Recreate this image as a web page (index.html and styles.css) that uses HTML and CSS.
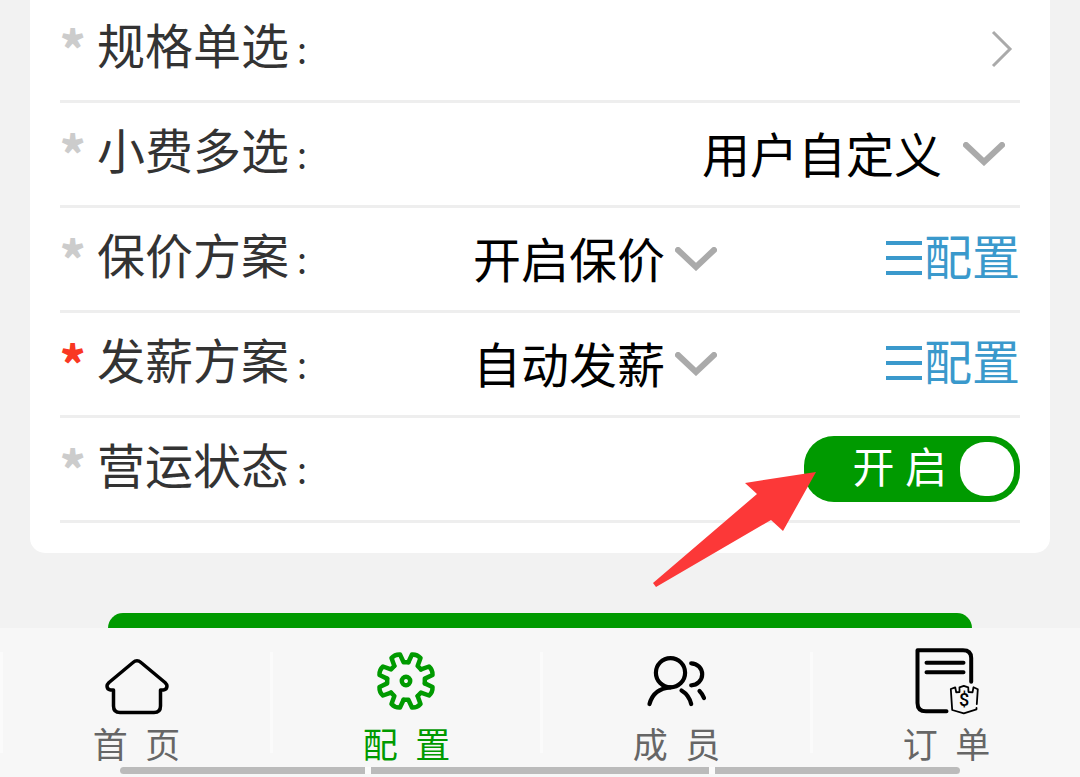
FILE: index.html
```
<!DOCTYPE html>
<html lang="zh">
  <head>
    <meta charset="UTF-8" />
    <meta name="viewport" content="width=device-width, initial-scale=1.0" />
    <title>配置</title>
    <link rel="stylesheet" href="styles.css">
  </head>
  <body>
    <main class="page">
      <form class="form-card">
        <!-- 规格单选 -->
        <div class="row">
          <span class="star">*</span>
          <span class="label">规格单选<span class="colon">:</span></span>
          <button type="button" class="more" aria-label="规格单选">
            <svg width="22" height="38" viewBox="0 0 22 38"><path d="M2 2 L19 19 L2 36" /></svg>
          </button>
        </div>

        <!-- 小费多选 -->
        <div class="row">
          <span class="star">*</span>
          <label class="label" for="tip">小费多选<span class="colon">:</span></label>
          <div class="picker picker-end">
            <select id="tip"><option>用户自定义</option></select>
            <svg class="arrow" viewBox="0 0 42 24"><path d="M3 3 L21 20 L39 3" /></svg>
          </div>
        </div>

        <!-- 保价方案 -->
        <div class="row">
          <span class="star">*</span>
          <label class="label" for="insure">保价方案<span class="colon">:</span></label>
          <div class="picker">
            <select id="insure"><option>开启保价</option></select>
            <svg class="arrow" viewBox="0 0 42 24"><path d="M3 3 L21 20 L39 3" /></svg>
          </div>
          <a class="config" href="#insure">
            <svg width="40" height="36" viewBox="0 0 40 36"><path d="M2 2 H38 M2 17 H38 M2 32 H38" /></svg>配置
          </a>
        </div>

        <!-- 发薪方案 -->
        <div class="row">
          <span class="star required">*</span>
          <label class="label" for="salary">发薪方案<span class="colon">:</span></label>
          <div class="picker">
            <select id="salary"><option>自动发薪</option></select>
            <svg class="arrow" viewBox="0 0 42 24"><path d="M3 3 L21 20 L39 3" /></svg>
          </div>
          <a class="config" href="#salary">
            <svg width="40" height="36" viewBox="0 0 40 36"><path d="M2 2 H38 M2 17 H38 M2 32 H38" /></svg>配置
          </a>
        </div>

        <!-- 营运状态 -->
        <div class="row">
          <span class="star">*</span>
          <label class="label" for="status">营运状态<span class="colon">:</span></label>
          <label class="switch" for="status">
            <span>开 启</span>
            <input type="checkbox" id="status" checked />
          </label>
          <svg class="pointer" width="164" height="116" viewBox="0 0 164 116">
            <path d="M163 0 L92 11 L104 22 L0 111 L3 115 L118 48 L130 59 Z" />
          </svg>
        </div>
      </form>

      <button type="button" class="submit" aria-label="提交"></button>
    </main>

    <!-- 底部导航 -->
    <nav class="tabbar">
      <a class="tab" href="#home">
        <svg class="icon" viewBox="0 0 72 72" stroke-width="3.5">
          <path d="M12.5 45 H9.5 Q6 44.5 6 41 Q6 39.5 8 37.5 L32 17.5 Q36 14 40 17.5 L64 37.5 Q66 39.5 66 41 Q66 44.5 62.5 45 H59.5 V61 Q59.5 67.5 53 67.5 H19 Q12.5 67.5 12.5 61 Z" />
        </svg>
        <span>首&nbsp; 页</span>
      </a>
      <a class="tab active" href="#config">
        <svg class="icon" viewBox="-35 -36 72 72" stroke-width="4.5">
          <defs>
            <path id="tooth" d="M-5 -18.3 L-4.6 -26.8 Q0 -29 4.6 -26.8 L5 -18.3 L9.4 -16.5" />
          </defs>
          <use href="#tooth" transform="rotate(22.5)" />
          <use href="#tooth" transform="rotate(67.5)" />
          <use href="#tooth" transform="rotate(112.5)" />
          <use href="#tooth" transform="rotate(157.5)" />
          <use href="#tooth" transform="rotate(202.5)" />
          <use href="#tooth" transform="rotate(247.5)" />
          <use href="#tooth" transform="rotate(292.5)" />
          <use href="#tooth" transform="rotate(337.5)" />
          <circle r="4.2" />
        </svg>
        <span>配&nbsp; 置</span>
      </a>
      <a class="tab" href="#members">
        <svg class="icon" viewBox="0 0 72 72" stroke-width="4.2">
          <circle cx="29.5" cy="27.7" r="14.6" />
          <path d="M8.5 59 Q12.5 43.5 29.5 42.3 M40.5 45.5 Q48 50 50.2 59 M50.2 18.3 A11 11 0 0 1 50.2 40.3 M58.5 46 Q61.5 49 63 53" />
        </svg>
        <span>成&nbsp; 员</span>
      </a>
      <a class="tab" href="#orders">
        <svg class="icon" viewBox="0 0 72 72" stroke-width="4">
          <path d="M60.2 36.7 V13 Q60.2 5.2 52 5.2 H6.5 V58 Q6.5 66.3 15 66.3 H35.5 M15.5 17.7 H52.5 M15.5 27.3 H52.5" />
          <path stroke-width="1.8" d="M65.8 59 L66.8 44.3 L62.5 42.3 L61.5 47.3 L57.5 47 L57.2 42.3 L52.8 40.8 L48.5 42.3 L48.5 47 L45.2 47.3 L44.2 42.3 L39.8 44 L41.2 65 L52.8 68.3 L65.5 64.3 V63" />
          <text class="coin" x="53" y="61">$</text>
        </svg>
        <span>订&nbsp; 单</span>
      </a>
      <div class="gesture">
        <i class="side"></i>
        <i class="mid"></i>
        <i class="side"></i>
      </div>
    </nav>
  </body>
</html>
```
FILE: styles.css
```
:root {
  --green: #009a00;
  --blue: #3a99cc;
  --line: #eeeeee;
  --gray: #aaaaaa;
}

* {
  margin: 0;
  padding: 0;
  box-sizing: border-box;
}

body {
  font-family: Roboto, "Noto Sans CJK SC", sans-serif;
  font-size: 48px;
  line-height: 60px;
  color: #333;
  background: #f2f2f2;
  height: 100vh;
  overflow: hidden;
}

svg {
  display: block;
  fill: none;
}

/* 表单卡片 */
.form-card {
  margin: -2px 30px 0;
  padding: 0 30px 30px;
  background: #fff;
  border-radius: 0 0 15px 15px;
}

.row {
  position: relative;
  display: flex;
  align-items: center;
  height: 105px;
  border-bottom: 3px solid var(--line);
}

.star {
  width: 37px;
  padding-bottom: 6px;
  font-family: "Noto Sans CJK SC", sans-serif;
  font-weight: 900;
  color: #ccc;
}

.star.required {
  color: #f93722;
}

.label {
  width: 376px;
  padding-bottom: 2px;
}

.colon {
  margin-left: 8px;
  font-family: "Noto Sans CJK SC", sans-serif;
  font-size: 36px;
}

.more {
  margin-left: auto;
  padding-right: 7px;
  border: 0;
  background: none;
}

.more path {
  stroke: var(--gray);
  stroke-width: 3;
}

.picker {
  display: flex;
  align-items: center;
  gap: 9px;
}

.picker-end {
  margin-left: auto;
  padding-right: 15px;
  gap: 20px;
}

.picker select {
  appearance: none;
  border: 0;
  background: none;
  font: inherit;
  color: #000;
  padding-top: 6px;
}

.arrow {
  width: 42px;
  height: 24px;
}

.arrow path {
  stroke: var(--gray);
  stroke-width: 6;
  stroke-linecap: round;
}

.config {
  display: flex;
  align-items: center;
  margin-left: auto;
  color: var(--blue);
  text-decoration: none;
}

.config path {
  stroke: currentColor;
  stroke-width: 4;
}

/* 开关 */
.switch {
  display: flex;
  align-items: center;
  justify-content: flex-end;
  gap: 13px;
  width: 216px;
  height: 66px;
  margin-left: auto;
  padding-right: 6px;
  border-radius: 30px;
  background: var(--green);
  color: #fff;
  font-size: 42px;
}

.switch input {
  appearance: none;
  width: 54px;
  height: 54px;
  border-radius: 25px;
  background: #fff;
}

/* 红色箭头 */
.pointer {
  position: absolute;
  top: 54px;
  right: 203px;
  z-index: 1;
}

.pointer path {
  fill: #fc3838;
}

.submit {
  display: block;
  width: 80%;
  height: 120px;
  margin: 60px auto 0;
  border: 0;
  border-radius: 15px;
  background: var(--green);
}

/* 底部导航 */
.tabbar {
  position: fixed;
  left: 0;
  right: 0;
  bottom: 0;
  display: flex;
  height: 149px;
  padding: 24px 0;
  background: #f7f7f7;
}

.tab {
  flex: 1;
  display: flex;
  flex-direction: column;
  align-items: center;
  gap: 6px;
  border-left: 3px solid #fbfbfb;
  color: #666;
  font-size: 35px;
  line-height: 48px;
  text-decoration: none;
}

.tab.active {
  color: var(--green);
}

.icon {
  flex: none;
  width: 72px;
  height: 72px;
  margin-top: -7px;
  stroke: #000;
  stroke-linecap: round;
  stroke-linejoin: round;
}

.active .icon {
  stroke: var(--green);
}

.coin {
  fill: #000;
  stroke: none;
  font-size: 18px;
  font-weight: 500;
  text-anchor: middle;
}

.gesture {
  position: absolute;
  left: 120px;
  right: 120px;
  bottom: 3px;
  display: flex;
  gap: 6px;
  height: 7px;
  border-radius: 4px;
  overflow: hidden;
  background: #fbfbfb;
}

.gesture i {
  background: #bbb;
}

.side {
  flex: 245;
}

.mid {
  flex: 338;
}
```
